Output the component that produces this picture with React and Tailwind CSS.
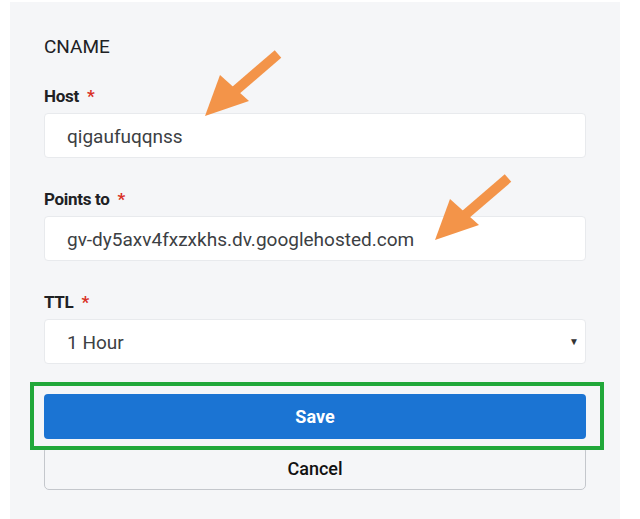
import React from 'react';

const Label = ({ children }) => (
  <p className="h-[20px] text-[17px] leading-[20px] font-bold text-[#202124] tracking-[-0.3px]">
    {children}
    <span className="ml-[8px] text-[#d93025]">*</span>
  </p>
);

const Field = ({ value }) => (
  <div className="mt-[7px] h-[45px] bg-white border border-[#e8eaed] rounded-[4px] pl-[22px] pt-[3px] flex items-center text-[19px] text-[#3c4043]">
    {value}
  </div>
);

const Arrow = ({ className }) => (
  <svg className={className} width="80" height="72" viewBox="0 0 80 72">
    <path d="M73 4 L30 41" stroke="#f39449" strokeWidth="10" strokeLinecap="butt" />
    <polygon points="0,66 15,25 44,51" fill="#f39449" />
  </svg>
);

const App = () => {
  return (
    <div className="w-[640px] h-[519px] bg-white pt-[2px] pl-[10px]" style={{ fontFamily: 'Roboto, "Liberation Sans", sans-serif' }}>
      <div className="relative w-[610px] h-[517px] bg-[#f5f6f8] px-[34px] pt-[33px]">
        <p className="h-[24px] text-[19px] leading-[24px] text-[#202124]">CNAME</p>

        <div className="mt-[27px]">
          <Label>Host</Label>
          <Field value="qigaufuqqnss" />
        </div>

        <div className="mt-[31px]">
          <Label>Points to</Label>
          <Field value="gv-dy5axv4fxzxkhs.dv.googlehosted.com" />
        </div>

        <div className="mt-[31px]">
          <Label>TTL</Label>
          <div className="mt-[7px] h-[45px] bg-white border border-[#e8eaed] rounded-[4px] pl-[22px] pr-[6px] flex items-center justify-between text-[19px] text-[#3c4043]">
            <span className="pt-[3px]">1 Hour</span>
            <span className="text-[10px] text-[#333]">▼</span>
          </div>
        </div>

        <div className="relative mt-[30px]">
          <div className="absolute left-[-14px] right-[-18px] top-[-12px] bottom-[-11px] border-[4px] border-[#21a83a]" />
          <button className="relative w-full h-[45px] rounded-[4px] bg-[#1b74d3] text-white text-[18px] font-bold">
            Save
          </button>
        </div>

        <button className="mt-[7px] w-full h-[44px] rounded-[5px] border border-[#c4c7cc] text-[18px] font-medium text-[#111]">
          Cancel
        </button>

        <Arrow className="absolute left-[195px] top-[48px]" />
        <Arrow className="absolute left-[425px] top-[172px]" />
      </div>
    </div>
  );
};

export default App;
